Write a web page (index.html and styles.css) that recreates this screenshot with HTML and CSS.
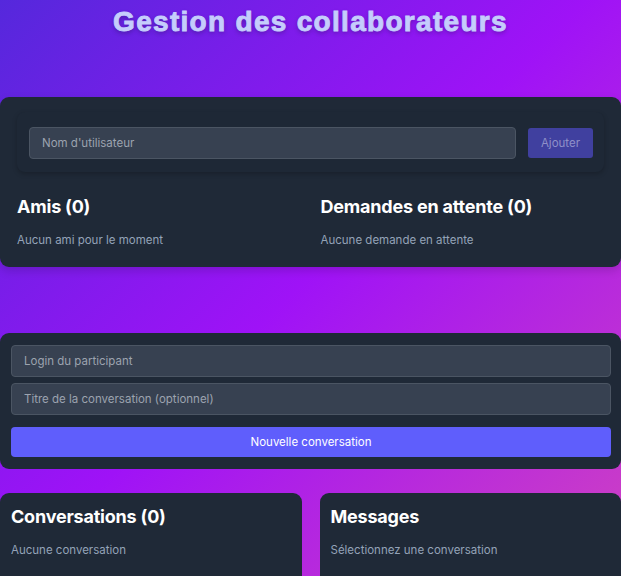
FILE: index.html
```html
<!DOCTYPE html>
<html lang="fr">
<head>
<meta charset="utf-8">
<title>Gestion des collaborateurs</title>
<link rel="stylesheet" href="styles.css">
</head>
<body>
<h1 class="title">Gestion des collaborateurs</h1>

<section class="card friends">
  <form class="add-form">
    <input class="field" type="text" placeholder="Nom d'utilisateur">
    <button class="btn-add" type="button">Ajouter</button>
  </form>
  <div class="columns">
    <div class="col">
      <h2 class="heading">Amis (0)</h2>
      <p class="empty">Aucun ami pour le moment</p>
    </div>
    <div class="col">
      <h2 class="heading">Demandes en attente (0)</h2>
      <p class="empty">Aucune demande en attente</p>
    </div>
  </div>
</section>

<section class="card new-conv">
  <input class="field" type="text" placeholder="Login du participant">
  <input class="field" type="text" placeholder="Titre de la conversation (optionnel)">
  <button class="btn-primary" type="button">Nouvelle conversation</button>
</section>

<div class="chat-row">
  <section class="card panel">
    <h2 class="heading">Conversations (0)</h2>
    <p class="empty">Aucune conversation</p>
  </section>
  <section class="card panel">
    <h2 class="heading">Messages</h2>
    <p class="empty">Sélectionnez une conversation</p>
  </section>
</div>
</body>
</html>
```

FILE: styles.css
```css
* { box-sizing: border-box; }

html, body { margin: 0; }

body {
  min-height: 600px;
  font-family: Inter, "Noto Sans", sans-serif;
  background: linear-gradient(135deg, #5528dc 0%, #9f12f7 48%, #d143c0 100%);
  color: #fff;
}

.title {
  margin: 0;
  padding-top: 6px;
  height: 97px;
  text-align: center;
  font-family: "Liberation Sans", Arial, sans-serif;
  font-weight: 700;
  font-size: 28px;
  letter-spacing: 1.3px;
  color: #c5cdfc;
  -webkit-text-stroke: 0.9px #c5cdfc;
  text-shadow: 0 2px 4px rgba(40, 20, 90, 0.45);
}

.card {
  background: #1f2937;
  border-radius: 9px;
}

.friends {
  padding: 15px 17px 1px;
  box-shadow: 0 4px 10px rgba(0, 0, 0, 0.15);
}

.add-form {
  display: flex;
  gap: 12px;
  align-items: center;
  padding: 15px 11px 13px 12px;
  border-radius: 8px;
  background: #1e2836;
  box-shadow: 0 2px 5px rgba(0, 0, 0, 0.22);
  margin: 0;
}

.field {
  display: block;
  width: 100%;
  height: 32px;
  padding: 0 12px;
  border: 1px solid #4b5563;
  border-radius: 4px;
  background: #374151;
  color: #fff;
  font-family: inherit;
  font-size: 11.5px;
  outline: none;
}

.field::placeholder { color: #9ca3af; }

.add-form .field { flex: 1; }

.btn-add {
  flex: none;
  width: 65px;
  height: 30px;
  border: 0;
  border-radius: 3px;
  background: #40409f;
  color: #8f90c9;
  font-family: inherit;
  font-size: 11.5px;
}

.columns {
  display: grid;
  grid-template-columns: 1fr 1fr;
  gap: 20px;
}

.heading {
  margin: 0;
  font-size: 18px;
  font-weight: 700;
  line-height: 22px;
  letter-spacing: -0.2px;
}

.columns .heading { margin-top: 24px; }

.empty {
  margin: 14px 0 0;
  font-size: 11.5px;
  line-height: 16px;
  color: #94a3b8;
}

.columns .empty { margin-bottom: 18px; }

.new-conv {
  margin-top: 66px;
  padding: 12px 10px 12px 11px;
  display: flex;
  flex-direction: column;
  gap: 6px;
}

.btn-primary {
  margin-top: 6px;
  height: 30px;
  border: 0;
  border-radius: 4px;
  background: #5f5efc;
  color: #fff;
  font-family: inherit;
  font-size: 11.5px;
}

.chat-row {
  margin-top: 24px;
  display: grid;
  grid-template-columns: 1fr 1fr;
  gap: 18px;
}

.panel {
  padding: 13px 11px 20px;
  min-height: 100px;
}
```
